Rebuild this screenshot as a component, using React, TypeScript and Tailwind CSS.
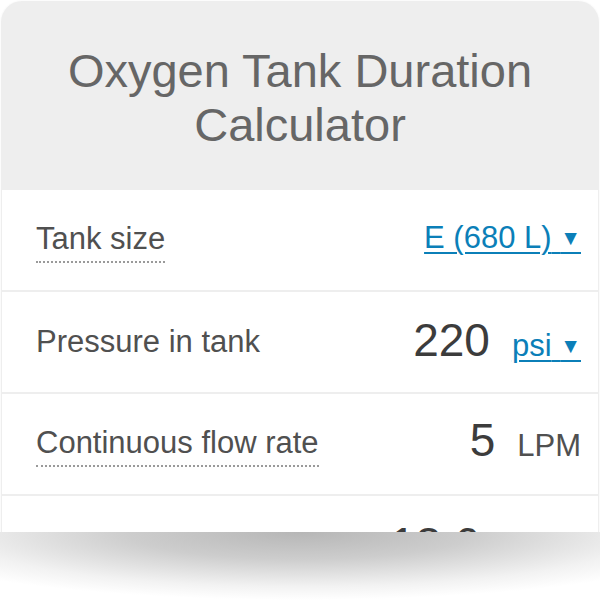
import React from "react";

const font = { fontFamily: '"Liberation Sans", Arial, sans-serif' };

function Arrow() {
  return <span className="text-[21px] align-[3px]">▼</span>;
}

function Link({ children }: { children: React.ReactNode }) {
  return (
    <span className="text-[31px] leading-[36px] text-[#0b7fb8] underline underline-offset-[4px] decoration-[2px]">
      {children}&nbsp;<Arrow />
    </span>
  );
}

function Row({ children }: { children: React.ReactNode }) {
  return (
    <div className="h-[100px] bg-white flex items-center justify-between pl-[34px] pr-[17px] pb-[4px]">
      {children}
    </div>
  );
}

export default function App() {
  return (
    <div className="relative w-[600px] h-[600px] bg-white overflow-hidden" style={font}>
      <div className="h-[532px] overflow-hidden rounded-t-[22px] bg-[#eeeeee] border-t border-x border-white/80 flex flex-col">
        <div className="h-[189px] shrink-0 flex items-center justify-center pt-[5px]">
          <h1 className="text-[47px] leading-[54px] text-[#666666] text-center">
            Oxygen Tank Duration
            <br />
            Calculator
          </h1>
        </div>
        <div className="flex flex-col gap-[2px] px-[1px]">
          <Row>
            <span className="text-[31px] text-[#505050] border-b-2 border-dotted border-[#9a9a9a] leading-[34px] pb-[5px] mt-[8px]">
              Tank size
            </span>
            <Link>E (680 L)</Link>
          </Row>
          <Row>
            <span className="text-[31px] text-[#505050] leading-[34px] mt-[4px]">Pressure in tank</span>
            <span className="flex items-baseline gap-[22px]">
              <span className="text-[46px] leading-[52px] text-[#3c3c3c]">220</span>
              <Link>psi</Link>
            </span>
          </Row>
          <Row>
            <span className="text-[31px] text-[#505050] border-b-2 border-dotted border-[#9a9a9a] leading-[34px] pb-[5px] mt-[8px]">
              Continuous flow rate
            </span>
            <span className="flex items-baseline gap-[22px]">
              <span className="text-[46px] leading-[52px] text-[#3c3c3c]">5</span>
              <span className="text-[31px] text-[#505050]">LPM</span>
            </span>
          </Row>
          <Row>
            <span className="text-[31px] text-[#505050] leading-[34px] mt-[3px]">Duration</span>
            <span className="flex items-baseline gap-[22px]">
              <span className="text-[46px] leading-[52px] text-[#3c3c3c]">13.6</span>
              <Link>min</Link>
            </span>
          </Row>
        </div>
      </div>
      <div className="h-[68px] bg-[radial-gradient(ellipse_72%_100%_at_50%_0%,#b6b6b6_0%,#cdcdcd_40%,#f2f2f2_80%,#ffffff_100%)]" />
    </div>
  );
}
